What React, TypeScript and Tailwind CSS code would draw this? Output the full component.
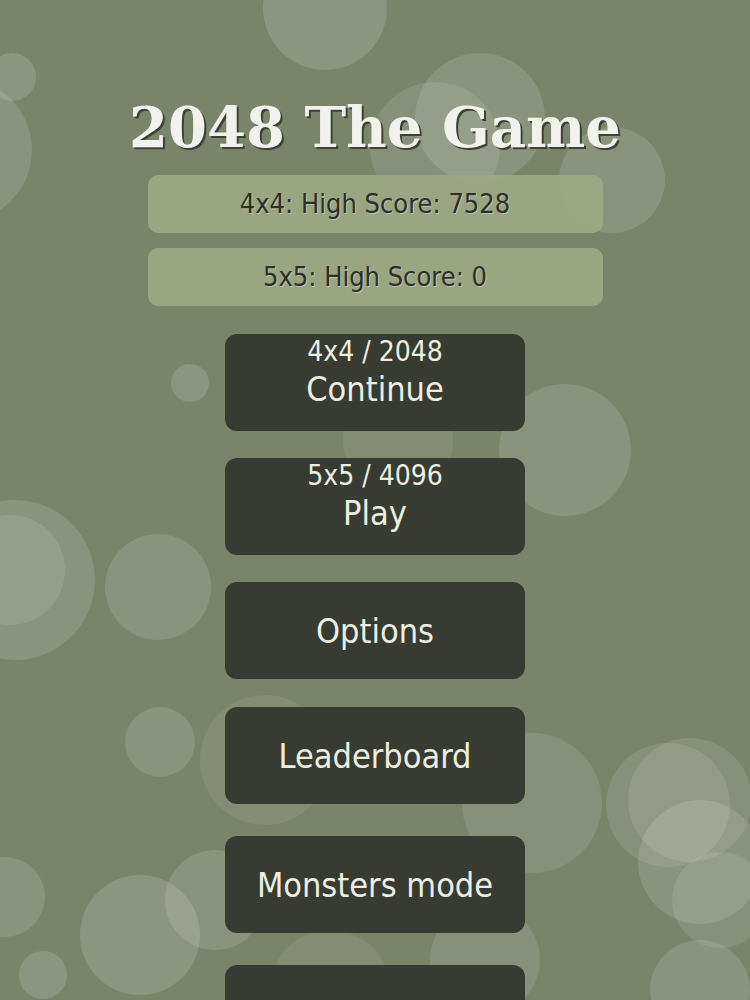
const bubbles: [number, number, number, number][] = [
  [325, 8, 62, 0.14],
  [12, 77, 24, 0.14],
  [-40, 150, 72, 0.12],
  [480, 118, 65, 0.12],
  [435, 147, 65, 0.1],
  [612, 180, 53, 0.12],
  [190, 383, 19, 0.14],
  [565, 450, 66, 0.12],
  [398, 440, 55, 0.08],
  [15, 580, 80, 0.12],
  [10, 570, 55, 0.1],
  [158, 587, 53, 0.12],
  [160, 742, 35, 0.12],
  [265, 760, 65, 0.08],
  [532, 803, 70, 0.1],
  [668, 805, 62, 0.1],
  [690, 800, 62, 0.1],
  [700, 862, 62, 0.12],
  [720, 900, 48, 0.1],
  [5, 897, 40, 0.12],
  [140, 935, 60, 0.14],
  [215, 900, 50, 0.12],
  [43, 975, 24, 0.14],
  [485, 960, 55, 0.1],
  [700, 990, 50, 0.12],
  [330, 990, 60, 0.08],
];

const uiFont = "font-['DejaVu_Sans_Condensed','DejaVu_Sans',sans-serif] font-stretch-condensed";

type MenuItem = { label: string; sub?: string; gap: string };

const menu: MenuItem[] = [
  { sub: "4x4 / 2048", label: "Continue", gap: "mt-[28px]" },
  { sub: "5x5 / 4096", label: "Play", gap: "mt-[27px]" },
  { label: "Options", gap: "mt-[27px]" },
  { label: "Leaderboard", gap: "mt-[28px]" },
  { label: "Monsters mode", gap: "mt-[32px]" },
  { label: "", gap: "mt-[32px]" },
];

function Bokeh() {
  return (
    <svg
      className="absolute inset-0 h-full w-full"
      viewBox="0 0 750 1000"
      preserveAspectRatio="none"
    >
      {bubbles.map(([cx, cy, r, o], i) => (
        <circle key={i} cx={cx} cy={cy} r={r} fill="#ffffff" fillOpacity={o} />
      ))}
    </svg>
  );
}

function ScoreBox({ text }: { text: string }) {
  return (
    <div
      className={`flex h-[58px] w-[455px] items-center justify-center rounded-[10px] bg-[#9ca784]/95 text-[27px] text-[#2c3026] [text-shadow:1px_1px_0_rgba(255,255,255,0.35)] ${uiFont}`}
    >
      {text}
    </div>
  );
}

function MenuButton({ item }: { item: MenuItem }) {
  return (
    <div
      className={`flex h-[97px] w-[300px] shrink-0 flex-col items-center rounded-[12px] bg-[#383b31] text-[#eceee4] ${item.sub ? "pt-[2px]" : "justify-center"} ${item.gap} ${uiFont}`}
    >
      {item.sub && <span className="text-[28px] leading-[32px]">{item.sub}</span>}
      {item.label && <span className="text-[34px] leading-[42px]">{item.label}</span>}
    </div>
  );
}

export default function App() {
  return (
    <div className="relative h-screen w-full overflow-hidden bg-[#7a8469]">
      <Bokeh />
      <div className="relative flex flex-col items-center pt-[99px]">
        <h1 className="font-['DejaVu_Serif',serif] text-[56px] leading-none font-bold text-[#f2f2ec] [text-shadow:2px_2px_0_#3e4236]">
          2048 The Game
        </h1>
        <div className="mt-[20px] flex flex-col items-center gap-[15px]">
          <ScoreBox text="4x4: High Score: 7528" />
          <ScoreBox text="5x5: High Score: 0" />
        </div>
        {menu.map((item, i) => (
          <MenuButton key={i} item={item} />
        ))}
      </div>
    </div>
  );
}
